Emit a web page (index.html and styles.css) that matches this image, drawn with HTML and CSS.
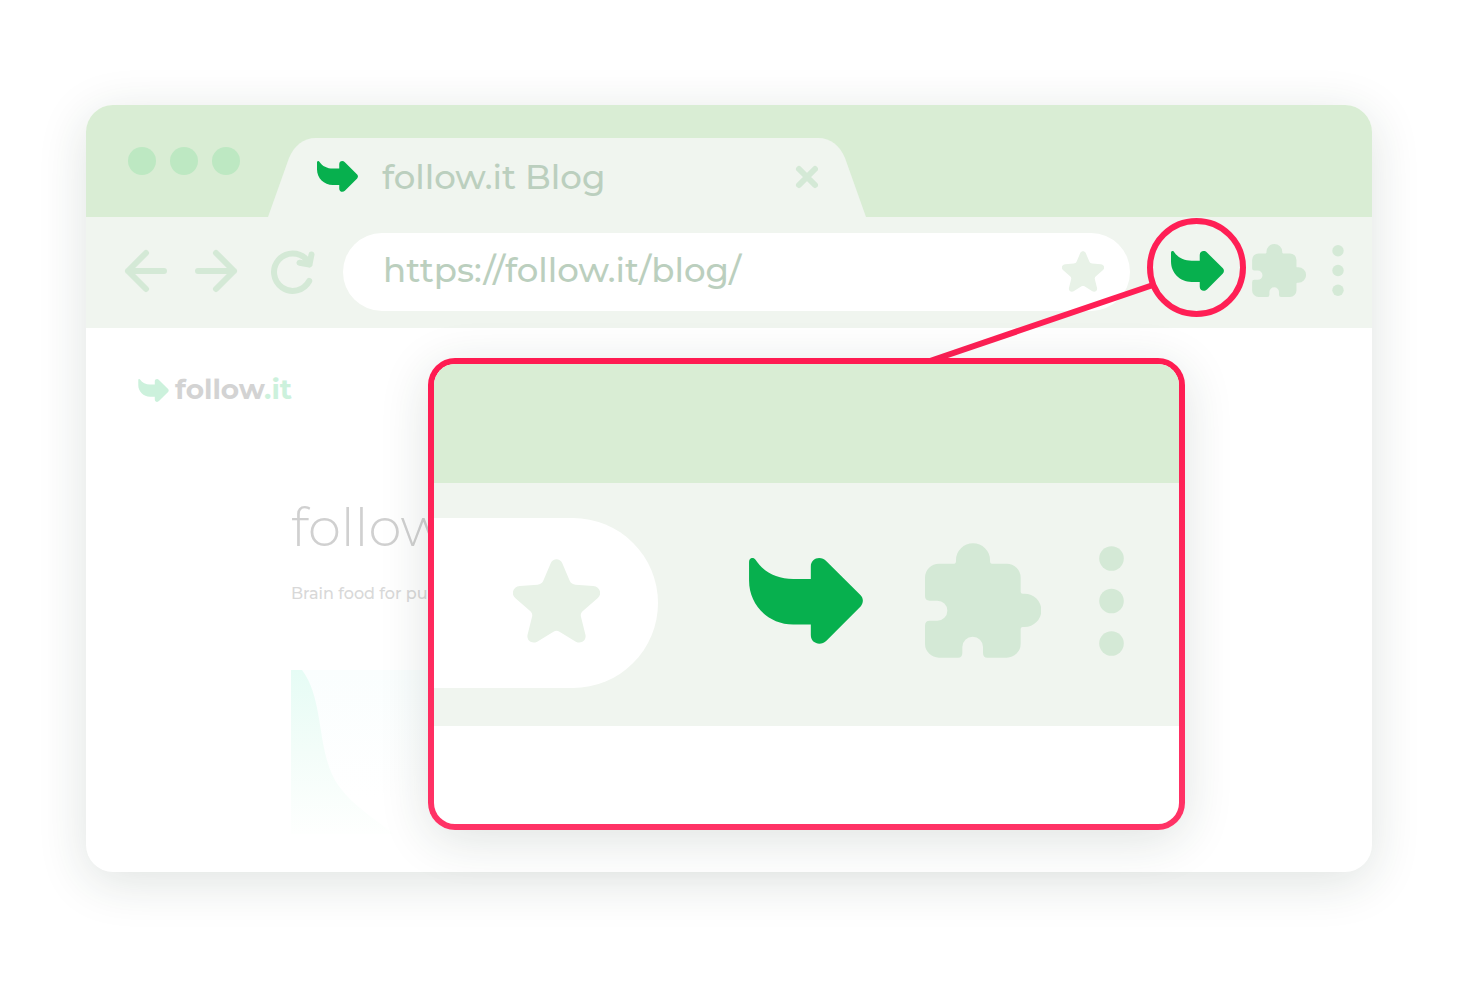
FILE: index.html
```html
<!DOCTYPE html>
<html lang="en">
<head>
<meta charset="utf-8">
<meta name="viewport" content="width=device-width, initial-scale=1">
<title>follow.it Blog</title>
<link rel="stylesheet" href="styles.css">
</head>
<body>
<svg class="sprite" aria-hidden="true">
  <symbol id="arrow" viewBox="0 0 343 259">
    <path d="M0 12C0-2 14-4 20 6C45 44 85 63 133 63H186V26C186 0 216-8 233 10L336 112C345 121 345 135 336 146L233 249C216 266 186 258 186 232V200H133C58 200 0 142 0 68Z"/>
  </symbol>
  <symbol id="star" viewBox="0 0 260 252">
    <path d="M113 12C120-3 140-3 147 12L170 66C173 73 179 76 187 77L240 81C260 83 268 104 254 117L210 155C204 160 202 165 203 172L217 228C220 246 203 256 188 248L139 218C133 214 127 214 121 218L72 248C57 256 40 246 43 228L57 172C58 165 56 160 50 155L6 117C-8 104 0 83 20 81L73 77C81 76 87 73 90 66Z"/>
  </symbol>
  <symbol id="puzzle" viewBox="0 0 348 343">
    <path d="M42 61H88Q93 61 93 54V50A51 50 0 0 1 195 50V54Q195 61 200 61H245A42 42 0 0 1 287 103V145Q287 151 293 151H299A50 50 0 0 1 299 251H293Q287 251 287 257V301A42 42 0 0 1 245 343H187Q174 343 174 328V311A31 31 0 0 0 112 311V328Q112 343 99 343H42A42 42 0 0 1 0 301V247Q0 232 14 232H37A30 30 0 0 0 37 172H14Q0 172 0 158V103A42 42 0 0 1 42 61Z"/>
  </symbol>
  <symbol id="dots" viewBox="0 0 25 110">
    <circle cx="12.5" cy="12.5" r="12.3"/><circle cx="12.5" cy="55" r="12.3"/><circle cx="12.5" cy="97.5" r="12.3"/>
  </symbol>
</svg>

<main class="window">
  <header class="titlebar">
    <div class="lights"><span class="light"></span><span class="light"></span><span class="light"></span></div>
    <div class="tab">
      <svg class="tab-edge" viewBox="0 0 48 79" aria-hidden="true"><path d="M0 79L21 20C26 8 35 0 48 0V79Z"/></svg>
      <div class="tab-body">
        <svg class="tab-icon" aria-hidden="true"><use href="#arrow"/></svg>
        <span class="tab-title">follow.it Blog</span>
        <button class="button close" aria-label="Close tab">
          <svg viewBox="0 0 24 24" width="24" height="24"><path d="M5 4L21 20M21 4L5 20"/></svg>
        </button>
      </div>
      <svg class="tab-edge" viewBox="0 0 48 79" aria-hidden="true"><path d="M48 79L27 20C22 8 13 0 0 0V79Z"/></svg>
    </div>
  </header>

  <nav class="toolbar" aria-label="Browser">
    <div class="history">
      <button class="button" aria-label="Back"><svg class="line-icon" viewBox="0 0 42 44" width="42" height="44"><path d="M39 22H3M21 4L3 22L21 40"/></svg></button>
      <button class="button" aria-label="Forward"><svg class="line-icon" viewBox="0 0 42 44" width="42" height="44"><path d="M3 22H39M21 4L39 22L21 40"/></svg></button>
      <button class="button reload" aria-label="Reload"><svg class="line-icon" viewBox="0 0 44 44" width="44" height="44"><path d="M38.200 32A18.700 18.700 0 1 1 35.500 10.500L38.500 15.500M40.500 5.500L38.500 15.500L28.500 13.800"/></svg></button>
    </div>
    <div class="address">
      <input class="url" type="text" value="https://follow.it/blog/" aria-label="Address">
      <button class="button" aria-label="Bookmark"><svg class="star-small"><use href="#star"/></svg></button>
    </div>
    <div class="actions">
      <button class="button" aria-label="follow.it extension"><svg class="arrow-small"><use href="#arrow"/></svg></button>
      <button class="button" aria-label="Extensions"><svg class="puzzle-small"><use href="#puzzle"/></svg></button>
      <button class="button" aria-label="Menu"><svg class="dots-small"><use href="#dots"/></svg></button>
    </div>
  </nav>

  <section class="page">
    <a class="logo" href="#"><svg class="logo-icon" aria-hidden="true"><use href="#arrow"/></svg><span class="logo-name">follow<span class="logo-tld">.it</span></span></a>
    <article class="article">
      <h1 class="headline">follow</h1>
      <p class="tagline">Brain food for pu</p>
      <svg class="chart" viewBox="0 0 160 164" width="160" height="164" aria-hidden="true">
        <defs>
          <linearGradient id="hill" x1="0" y1="0" x2="0" y2="1"><stop offset="0" stop-color="#e6fcf5"/><stop offset=".5" stop-color="#f3fdf9"/><stop offset="1" stop-color="#fefffe"/></linearGradient>
          <linearGradient id="sky" x1="0" y1="0" x2="0" y2="1"><stop offset="0" stop-color="#fafefe"/><stop offset="1" stop-color="#ffffff"/></linearGradient>
        </defs>
        <path fill="url(#sky)" d="M0 0H160V130H0Z"/>
        <path fill="url(#hill)" d="M0 0H11C34 30 25 83 47 115C62 136 84 149 103 164H0Z"/>
      </svg>
    </article>
  </section>

  <svg class="pointer" viewBox="0 0 320 150" width="320" height="150" aria-hidden="true">
    <path d="M1 145L227 68"/><circle cx="270.500" cy="50.500" r="46.500"/>
  </svg>

  <aside class="callout" aria-label="Toolbar detail">
    <div class="detail">
      <div class="detail-title"></div>
      <div class="detail-toolbar">
        <div class="detail-address"><svg class="star-large"><use href="#star"/></svg></div>
        <div class="detail-actions">
          <svg class="arrow-large"><use href="#arrow"/></svg>
          <svg class="puzzle-large"><use href="#puzzle"/></svg>
          <svg class="dots-large"><use href="#dots"/></svg>
        </div>
      </div>
    </div>
  </aside>
</main>
</body>
</html>
```
FILE: styles.css
```css
* { box-sizing: border-box; }

body {
  margin: 0;
  padding: 105px 86px 64px;
  background: #fff;
  font-family: Montserrat, Inter, sans-serif;
}

svg { display: block; }
.sprite { display: none; }

.button {
  padding: 0;
  border: 0;
  background: none;
  cursor: pointer;
}

.window {
  position: relative;
  border-radius: 27px;
  background: #fff;
  box-shadow: 0 10px 50px rgba(25, 55, 45, .14);
}

.titlebar {
  display: flex;
  align-items: flex-end;
  gap: 28px;
  height: 112px;
  padding-left: 42px;
  border-radius: 27px 27px 0 0;
  background: #d9edd4;
}

.lights {
  display: flex;
  gap: 14px;
  padding-bottom: 42px;
}

.light {
  width: 28px;
  height: 28px;
  border-radius: 50%;
  background: #bde8c2;
}

.tab { display: flex; }

.tab-edge {
  width: 48px;
  height: 79px;
  fill: #f0f5ef;
}

.tab-body {
  display: flex;
  align-items: center;
  width: 502px;
  height: 79px;
  padding: 0 0 2px 1px;
  background: #f0f5ef;
}

.tab-icon {
  width: 41px;
  height: 31px;
  margin-right: 24px;
  fill: #07b04e;
}

.tab-title {
  flex: 1;
  color: #bbcfbe;
  font-size: 34px;
  font-weight: 500;
}

.close svg {
  overflow: visible;
  fill: none;
  stroke: #d4e9d6;
  stroke-width: 6;
  stroke-linecap: round;
}

.toolbar {
  display: flex;
  align-items: center;
  height: 111px;
  padding: 0 28px 1px 39px;
  background: #f0f5ef;
}

.history {
  display: flex;
  gap: 28px;
  padding-bottom: 2px;
}

.reload { margin-left: 6px; }

.line-icon {
  overflow: visible;
  fill: none;
  stroke: #d4e9d6;
  stroke-width: 6;
  stroke-linecap: round;
  stroke-linejoin: round;
}

.address {
  display: flex;
  flex: 1;
  align-items: center;
  min-width: 0;
  height: 78px;
  margin: 0 41px 0 28px;
  padding: 0 26px 2px 40px;
  border-radius: 39px;
  background: #fff;
}

.url {
  flex: 1;
  min-width: 0;
  height: 76px;
  padding: 0 0 2px;
  border: 0;
  outline: 0;
  background: none;
  color: #bbcfbe;
  font: 500 34px Montserrat, Inter, sans-serif;
}

.actions {
  display: flex;
  align-items: center;
  gap: 26px;
  padding-bottom: 3px;
}

.star-small { width: 42px; height: 41px; fill: #e8f2e7; }
.arrow-small { width: 53px; height: 40px; margin-right: 2px; fill: #07b04e; }
.puzzle-small { width: 54px; height: 53px; fill: #d4e9d6; }
.dots-small { width: 12px; height: 51px; fill: #d4e9d6; }

.page {
  min-height: 544px;
  padding: 44px 52px 38px;
}

.logo {
  display: flex;
  align-items: center;
  gap: 6px;
  height: 36px;
  color: #d3d3d3;
  font-size: 28px;
  font-weight: 700;
  text-decoration: none;
}

.logo-icon { width: 31px; height: 23px; fill: #ccf1dc; }
.logo-name { padding-bottom: 2px; }
.logo-tld { color: #ccf1dc; }

.article { padding: 84px 0 0 153px; }

.headline {
  margin: 0;
  color: #d0d0d0;
  font-size: 53px;
  font-weight: 300;
  line-height: 70px;
}

.tagline {
  margin: 20px 0 64px;
  color: #d8d8d8;
  font-size: 16px;
  font-weight: 500;
  line-height: 24px;
}

.pointer {
  position: absolute;
  top: 112px;
  right: 126px;
  fill: none;
  stroke: #ff1f55;
  stroke-width: 6;
}

.callout {
  position: absolute;
  top: 253px;
  right: 187px;
  left: 342px;
  padding: 6px;
  border-radius: 27px;
  background: linear-gradient(#ff1b51, #ff3366);
  box-shadow: 0 10px 50px rgba(25, 55, 45, .14);
}

.detail {
  overflow: hidden;
  padding-bottom: 98px;
  border-radius: 21px;
  background: #fff;
}

.detail-title {
  height: 119px;
  background: #d9edd4;
}

.detail-toolbar {
  display: flex;
  align-items: center;
  height: 243px;
  padding: 0 55px 4px 0;
  background: #f0f5ef;
}

.detail-address {
  display: flex;
  flex: 1;
  align-items: center;
  justify-content: flex-end;
  height: 170px;
  margin-right: 91px;
  padding: 0 58px 4px 0;
  border-radius: 0 85px 85px 0;
  background: #fff;
}

.detail-actions {
  display: flex;
  align-items: center;
  padding-bottom: 4px;
}

.star-large { width: 87px; height: 84px; fill: #e8f2e7; }
.arrow-large { width: 114px; height: 86px; margin-right: 62px; fill: #07b04e; }
.puzzle-large { width: 116px; height: 115px; margin-right: 58px; fill: #d4e9d6; }
.dots-large { width: 25px; height: 110px; fill: #d4e9d6; }
```
